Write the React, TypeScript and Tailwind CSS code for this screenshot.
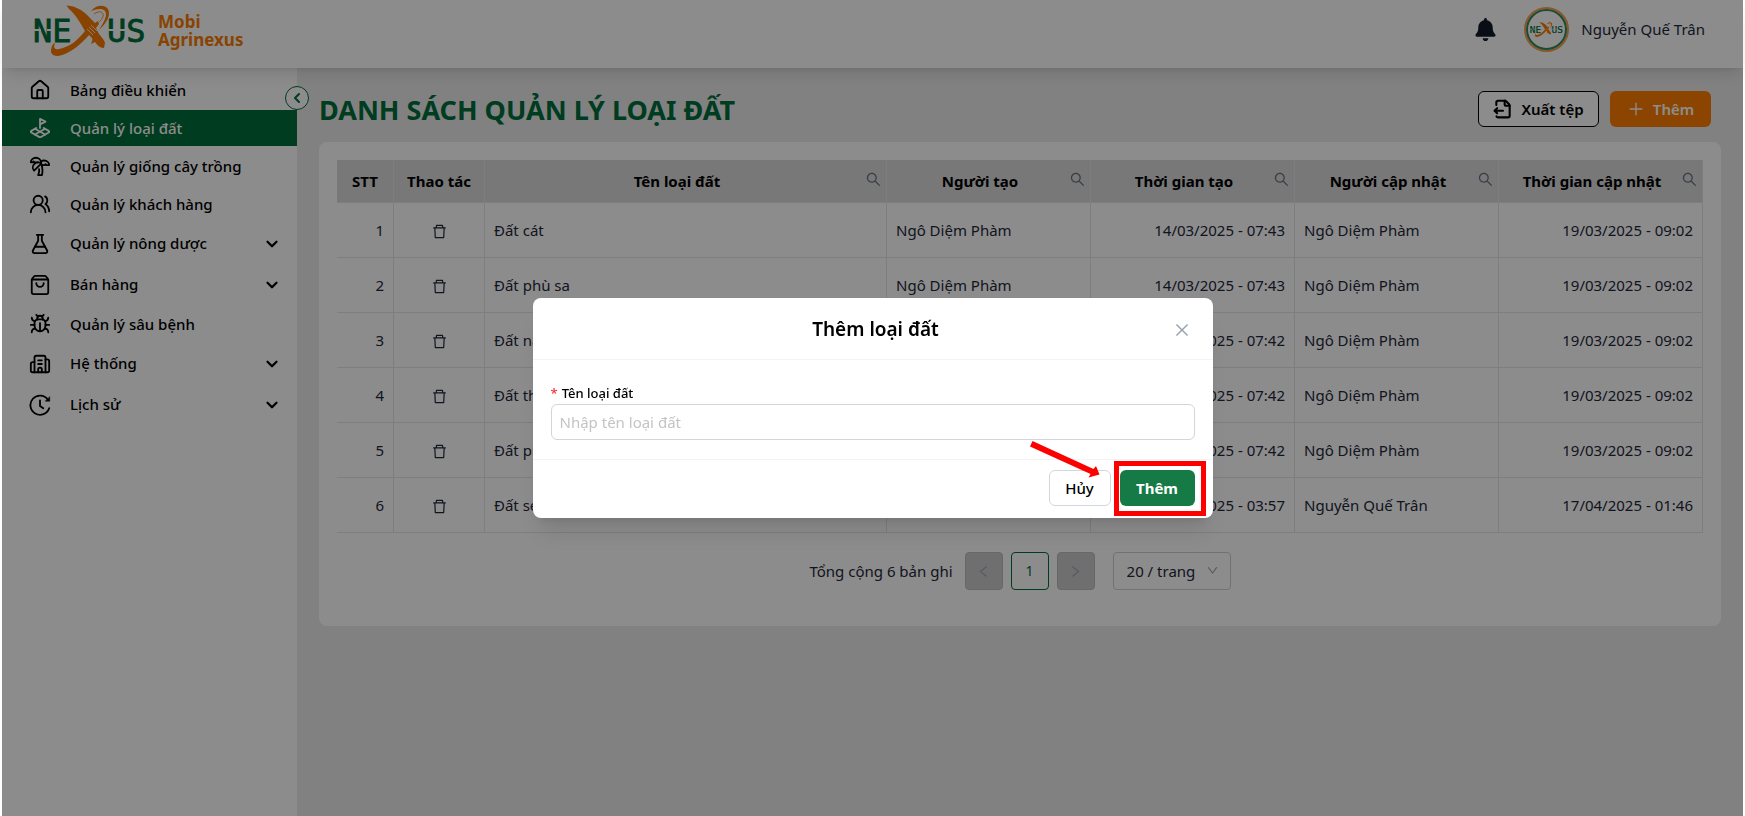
import React, { useState } from 'react';
import {
  Bug,
  Building2,
  ChevronDown,
  ChevronLeft,
  FileOutput,
  FlaskConical,
  House,
  LandPlot,
  ShoppingBag,
  TreePalm,
  UsersRound,
} from 'lucide-react';
import {
  AiOutlineClose,
  AiOutlineDelete,
  AiOutlineDown,
  AiOutlineLeft,
  AiOutlinePlus,
  AiOutlineRight,
  AiOutlineSearch,
} from 'react-icons/ai';
import { FaBell } from 'react-icons/fa';
import { clsx } from 'clsx';

interface MenuItem {
  label: string;
  icon: React.ReactNode;
  active?: boolean;
  expandable?: boolean;
}

interface LandType {
  id: number;
  name: string;
  createdBy: string;
  createdAt: string;
  updatedBy: string;
  updatedAt: string;
}

const HistoryIcon = () => (
  <svg width="22" height="22" viewBox="0 0 24 24" fill="none" stroke="currentColor" strokeWidth="2" strokeLinecap="round" strokeLinejoin="round">
    <path d="M22 15.5A10.5 10.5 0 1 1 20.5 6" />
    <path d="M22.6 3.2v4.6h-4.6z" fill="currentColor" strokeWidth="0.6" />
    <path d="M12 7v6l3.6 2.6" />
  </svg>
);

const menuItems: MenuItem[] = [
  { label: 'Bảng điều khiển', icon: <House size={22} /> },
  { label: 'Quản lý loại đất', icon: <LandPlot size={22} />, active: true },
  { label: 'Quản lý giống cây trồng', icon: <TreePalm size={22} /> },
  { label: 'Quản lý khách hàng', icon: <UsersRound size={22} /> },
  { label: 'Quản lý nông dược', icon: <FlaskConical size={22} />, expandable: true },
  { label: 'Bán hàng', icon: <ShoppingBag size={22} />, expandable: true },
  { label: 'Quản lý sâu bệnh', icon: <Bug size={22} /> },
  { label: 'Hệ thống', icon: <Building2 size={22} />, expandable: true },
  { label: 'Lịch sử', icon: <HistoryIcon />, expandable: true },
];

const landTypes: LandType[] = [
  { id: 1, name: 'Đất cát', createdBy: 'Ngô Diệm Phàm', createdAt: '14/03/2025 - 07:43', updatedBy: 'Ngô Diệm Phàm', updatedAt: '19/03/2025 - 09:02' },
  { id: 2, name: 'Đất phù sa', createdBy: 'Ngô Diệm Phàm', createdAt: '14/03/2025 - 07:43', updatedBy: 'Ngô Diệm Phàm', updatedAt: '19/03/2025 - 09:02' },
  { id: 3, name: 'Đất nâu', createdBy: 'Ngô Diệm Phàm', createdAt: '14/03/2025 - 07:42', updatedBy: 'Ngô Diệm Phàm', updatedAt: '19/03/2025 - 09:02' },
  { id: 4, name: 'Đất thịt', createdBy: 'Ngô Diệm Phàm', createdAt: '14/03/2025 - 07:42', updatedBy: 'Ngô Diệm Phàm', updatedAt: '19/03/2025 - 09:02' },
  { id: 5, name: 'Đất phèn', createdBy: 'Ngô Diệm Phàm', createdAt: '14/03/2025 - 07:42', updatedBy: 'Ngô Diệm Phàm', updatedAt: '19/03/2025 - 09:02' },
  { id: 6, name: 'Đất sét', createdBy: 'Nguyễn Quế Trân', createdAt: '17/04/2025 - 03:57', updatedBy: 'Nguyễn Quế Trân', updatedAt: '17/04/2025 - 01:46' },
];

const columns = [
  { title: 'STT', width: 'w-[57px]' },
  { title: 'Thao tác', width: 'w-[91px]' },
  { title: 'Tên loại đất', width: '', searchable: true },
  { title: 'Người tạo', width: 'w-[204px]', searchable: true },
  { title: 'Thời gian tạo', width: 'w-[204px]', searchable: true },
  { title: 'Người cập nhật', width: 'w-[204px]', searchable: true },
  { title: 'Thời gian cập nhật', width: 'w-[204px]', searchable: true },
];

function Logo({ className }: { className?: string }) {
  return (
    <svg viewBox="0 0 112 58" className={className} role="img" aria-label="Nexus">
      <g fill="#006d3a" fontFamily="'DejaVu Sans Mono', monospace" fontSize="32" fontWeight="400" stroke="#006d3a" strokeWidth="0.8">
        <text x="-1" y="42">NE</text>
        <text x="73" y="42">US</text>
      </g>
      {/* segment gaps */}
      <path d="M0 30h7M13 30h7M74 30h7M84 30h7" stroke="#fff" strokeWidth="1.8" />
      {/* long swoosh */}
      <path
        d="M32.500 5.500C43 6 51 12 57 19l4 4 3-2 1 3-3 4 3 6c2 3 5 5 6 9l-1 5c-4 0-7-3-9-6l-4 2c1-3 2-4 1-6l-3-3C46 45 36 54 24 56c-7 0-9-4-5-12l2-1c-2 5 0 7 4 6 11-2 19-9 26-18C46 22 41 14 35 9z"
        fill="#f97a00"
      />
      {/* leaf loop */}
      <path d="M57 11c5-6 13-7 17-2 3 6-1 14-9 21 5-8 9-15 6-19-3-3-8-2-14 0z" fill="#f97a00" />
      <path d="M60 14c4-3 8-3 9 0s-2 6-4 8" fill="none" stroke="#f97a00" strokeWidth="0.8" />
      <path d="M55 27l6 6M57 25l6 6M53 29l6 6" stroke="#fff" strokeWidth="0.8" />
    </svg>
  );
}

function Header() {
  return (
    <header className="relative z-10 flex h-[68px] shrink-0 justify-between bg-white shadow-lg">
      <a href="#" className="flex h-[58px] items-center gap-3 pl-8">
        <Logo className="h-[58px] w-28" />
        <span className="pt-1 text-[17px] leading-[18px] font-bold text-[#f97a00]">
          Mobi
          <br />
          Agrinexus
        </span>
      </a>
      <div className="flex h-[58px] items-center pr-[38px]">
        <button type="button" aria-label="Thông báo" className="mr-[27px] text-gray-900">
          <FaBell size={23} />
        </button>
        <div className="mr-3 flex size-[45px] items-center justify-center rounded-full border-2 border-[#f9a04a]">
          <div className="flex size-[41px] items-center justify-center rounded-full border-2 border-[#2f8a5c]">
            <Logo className="h-[18px] w-[33px]" />
          </div>
        </div>
        <span className="text-[15px] text-gray-800">Nguyễn Quế Trân</span>
      </div>
    </header>
  );
}

function Sidebar() {
  return (
    <aside className="relative w-[295px] shrink-0 bg-white pt-1">
      <nav className="flex flex-col gap-0.5">
        {menuItems.map((item) => (
          <a
            key={item.label}
            href="#"
            className={clsx(
              'flex items-center pr-4 pl-[27px] text-[15px] font-medium',
              item.expandable ? 'h-[39px]' : 'h-9',
              item.active ? 'bg-[#006d3a] text-white' : 'text-black'
            )}
          >
            <span className="mr-[19px] flex w-[22px] justify-center">{item.icon}</span>
            <span className="flex-1">{item.label}</span>
            {item.expandable && <ChevronDown size={18} strokeWidth={3} />}
          </a>
        ))}
      </nav>
      <button
        type="button"
        aria-label="Thu gọn menu"
        className="absolute top-[18px] -right-3 z-20 flex size-6 items-center justify-center rounded-full border border-[#006d3a] bg-white text-[#006d3a]"
      >
        <ChevronLeft size={16} strokeWidth={3} />
      </button>
    </aside>
  );
}

function LandTable() {
  const cell = 'border-r border-b border-[#e6e6e6] px-[9px]';
  return (
    <table className="w-full table-fixed border-separate border-spacing-0 text-[15px] text-gray-800">
      <thead>
        <tr className="h-[43px] bg-[#dadada] text-black">
          {columns.map((col) => (
            <th key={col.title} scope="col" className={clsx('border-r border-b border-[#e6e6e6] px-1 font-bold', col.width)}>
              <div className="flex items-center">
                <span className="flex-1 whitespace-nowrap">{col.title}</span>
                {col.searchable && (
                  <button type="button" aria-label={`Tìm ${col.title}`} className="mb-1 text-gray-500">
                    <AiOutlineSearch size={17} />
                  </button>
                )}
              </div>
            </th>
          ))}
        </tr>
      </thead>
      <tbody>
        {landTypes.map((row) => (
          <tr key={row.id} className="h-[55px]">
            <td className={clsx(cell, 'text-right')}>{row.id}</td>
            <td className={clsx(cell, 'text-center')}>
              <button type="button" aria-label={`Xóa ${row.name}`} className="align-middle">
                <AiOutlineDelete size={17} />
              </button>
            </td>
            <td className={cell}>{row.name}</td>
            <td className={cell}>{row.createdBy}</td>
            <td className={clsx(cell, 'text-right')}>{row.createdAt}</td>
            <td className={cell}>{row.updatedBy}</td>
            <td className={clsx(cell, 'text-right')}>{row.updatedAt}</td>
          </tr>
        ))}
      </tbody>
    </table>
  );
}

function Pagination() {
  const arrow = 'flex size-[38px] items-center justify-center rounded-sm border border-[#bdbdbd] bg-[#cbcbcb] text-gray-400';
  return (
    <div className="mt-[19px] flex items-center justify-center text-[15px] text-gray-800">
      <span className="mr-3">Tổng cộng 6 bản ghi</span>
      <button type="button" disabled aria-label="Trang trước" className={arrow}>
        <AiOutlineLeft size={15} />
      </button>
      <button type="button" className="mx-2 flex size-[38px] items-center justify-center rounded-sm border border-[#006d3a] bg-white text-sm text-[#006d3a]">
        1
      </button>
      <button type="button" disabled aria-label="Trang sau" className={arrow}>
        <AiOutlineRight size={15} />
      </button>
      <div className="relative ml-[18px]">
        <select aria-label="Số bản ghi mỗi trang" className="h-[38px] w-[118px] appearance-none rounded-sm border border-[#cfcfcf] bg-white pl-[13px]">
          <option>20 / trang</option>
          <option>50 / trang</option>
        </select>
        <AiOutlineDown size={13} className="pointer-events-none absolute top-3 right-3 text-gray-400" />
      </div>
    </div>
  );
}

function AddLandModal() {
  const [name, setName] = useState('');

  return (
    <div className="fixed inset-x-0.5 inset-y-0 z-30 flex items-start justify-center bg-black/45 pt-[298px]">
      <form
        role="dialog"
        aria-labelledby="modal-title"
        onSubmit={(e) => e.preventDefault()}
        className="relative w-[680px] rounded-lg bg-white shadow-xl"
      >
        <div className="flex h-[62px] items-center border-b border-gray-100 px-[18px] pt-0.5">
          <h2 id="modal-title" className="flex-1 pl-8 text-center text-[19px] font-semibold text-black">
            Thêm loại đất
          </h2>
          <button type="button" aria-label="Đóng" className="px-1 text-gray-400">
            <AiOutlineClose size={18} />
          </button>
        </div>
        <div className="px-[18px] pt-6 pb-[19px]">
          <label htmlFor="land-name" className="flex h-5 items-center gap-1 text-[13px] font-medium text-black">
            <span className="text-red-500">*</span>
            Tên loại đất
          </label>
          <input
            id="land-name"
            type="text"
            value={name}
            onChange={(e) => setName(e.target.value)}
            placeholder="Nhập tên loại đất"
            className="block h-9 w-full rounded-md border border-gray-300 px-2 text-[15px] placeholder:text-[#c4c4c4]"
          />
        </div>
        <div className="flex justify-end gap-[9px] border-t border-gray-100 px-[18px] pt-[10px] pb-3">
          <button type="button" className="h-9 w-[62px] rounded-md border border-gray-300 bg-white text-[15px] font-medium text-black">
            Hủy
          </button>
          <button type="submit" className="h-9 w-[75px] rounded-md bg-[#157a45] text-[15px] font-bold text-white">
            Thêm
          </button>
        </div>
        {/* step pointer */}
        <div className="pointer-events-none absolute right-[7px] bottom-0.5 h-[55px] w-[92px] border-5 border-[#ff0000]" />
        <svg className="pointer-events-none absolute right-[113px] bottom-[40px]" width="70" height="38" viewBox="0 0 70 38">
          <path d="M2.500 1L0 6.500 60.500 34 58.500 37.500 69.500 34.500 66 26 63.500 29z" fill="#ff0000" />
        </svg>
      </form>
    </div>
  );
}

export default function App() {
  return (
    <div className="flex min-h-screen flex-col border-x-2 border-white bg-[#ececec] font-['Noto_Sans','Open_Sans',sans-serif]">
      <Header />
      <div className="flex flex-1">
        <Sidebar />
        <main className="min-w-0 flex-1 px-[22px] pt-[23px]">
          <div className="flex h-9 items-center justify-between pr-[10px]">
            <h1 className="pt-0.5 text-[27px] font-bold text-[#006d3a]">DANH SÁCH QUẢN LÝ LOẠI ĐẤT</h1>
            <div className="flex gap-[11px]">
              <button type="button" className="flex h-9 w-[121px] items-center justify-center gap-2 rounded-md border border-black bg-white text-[15px] font-semibold text-black">
                <FileOutput size={20} strokeWidth={2.5} />
                Xuất tệp
              </button>
              <button type="button" className="flex h-9 w-[101px] items-center justify-center gap-2 rounded-md bg-[#ff7f00] text-[15px] font-semibold text-white">
                <AiOutlinePlus size={18} />
                Thêm
              </button>
            </div>
          </div>
          <section className="mt-[15px] rounded-lg bg-white px-[18px] pt-[18px] pb-9">
            <LandTable />
            <Pagination />
          </section>
        </main>
      </div>
      <AddLandModal />
    </div>
  );
}
